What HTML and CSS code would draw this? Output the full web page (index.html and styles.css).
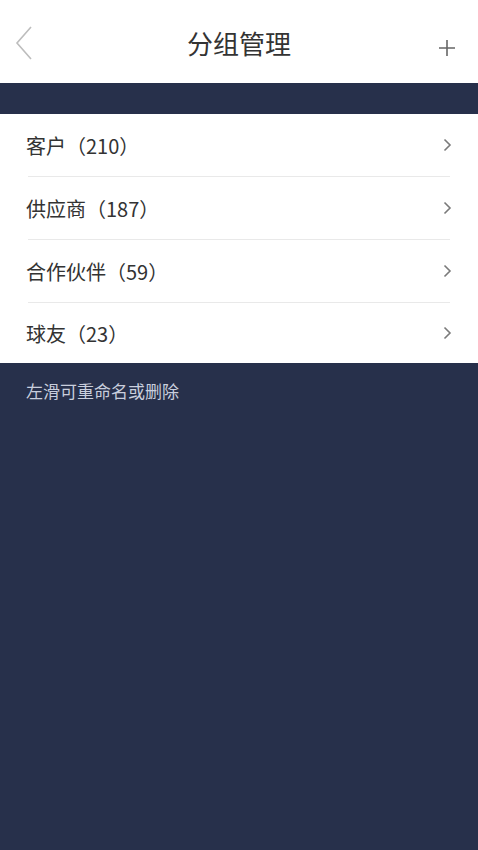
FILE: index.html
```html
<!DOCTYPE html>
<html lang="zh-CN">
<head>
<meta charset="utf-8">
<link rel="stylesheet" href="styles.css">
</head>
<body>
<div class="page">
  <header class="topbar">
    <svg class="back" width="20" height="36" viewBox="0 0 20 36"><path d="M17 2 L3 18 L17 34" fill="none" stroke="#bdbdbd" stroke-width="1.6"/></svg>
    <h1 class="title">分组管理</h1>
    <svg class="add" width="18" height="18" viewBox="0 0 18 18"><path d="M9 1 V17 M1 9 H17" stroke="#666" stroke-width="1.6" fill="none"/></svg>
  </header>
  <div class="band"></div>
  <ul class="list">
    <li class="row"><span class="label">客户（210）</span><svg class="chev" width="9" height="14" viewBox="0 0 9 14"><path d="M1.5 1.5 L7 7 L1.5 12.5" fill="none" stroke="#7a7a7a" stroke-width="1.6"/></svg></li>
    <li class="row"><span class="label">供应商（187）</span><svg class="chev" width="9" height="14" viewBox="0 0 9 14"><path d="M1.5 1.5 L7 7 L1.5 12.5" fill="none" stroke="#7a7a7a" stroke-width="1.6"/></svg></li>
    <li class="row"><span class="label">合作伙伴（59）</span><svg class="chev" width="9" height="14" viewBox="0 0 9 14"><path d="M1.5 1.5 L7 7 L1.5 12.5" fill="none" stroke="#7a7a7a" stroke-width="1.6"/></svg></li>
    <li class="row"><span class="label">球友（23）</span><svg class="chev" width="9" height="14" viewBox="0 0 9 14"><path d="M1.5 1.5 L7 7 L1.5 12.5" fill="none" stroke="#7a7a7a" stroke-width="1.6"/></svg></li>
  </ul>
  <p class="hint">左滑可重命名或删除</p>
</div>
</body>
</html>
```
FILE: styles.css
```css
html, body {
  margin: 0;
  padding: 0;
  background: #27304b;
  font-family: "Noto Sans CJK SC", "Noto Sans", sans-serif;
}
.page {
  width: 478px;
  min-height: 850px;
  background: #27304b;
}
.topbar {
  height: 83px;
  background: #fff;
  display: grid;
  grid-template-columns: 1fr auto 1fr;
  align-items: center;
  padding: 0 22px 0 14px;
  box-sizing: border-box;
}
.back {
  display: block;
  margin-top: 2px;
  justify-self: start;
}
.add {
  display: block;
  margin-top: 12px;
  justify-self: end;
}
.title {
  margin: 0 0 0 8px;
  font-size: 26px;
  font-weight: 400;
  color: #333;
  margin-top: 2px;
}
.band {
  height: 31px;
}
.list {
  list-style: none;
  margin: 0;
  padding: 0;
  background: #fff;
}
.row {
  height: 62px;
  margin: 0 28px 0 28px;
  display: flex;
  align-items: center;
  justify-content: space-between;
  border-bottom: 1px solid #e9e9e9;
}
.row:last-child {
  border-bottom: none;
  height: 60px;
}
.label {
  font-size: 20px;
  color: #333;
  margin-left: -2px;
}
.chev {
  display: block;
  margin-right: -2px;
}
.hint {
  margin: 0;
  padding: 15px 0 0 26px;
  font-size: 17px;
  color: #c9cedd;
}
```
